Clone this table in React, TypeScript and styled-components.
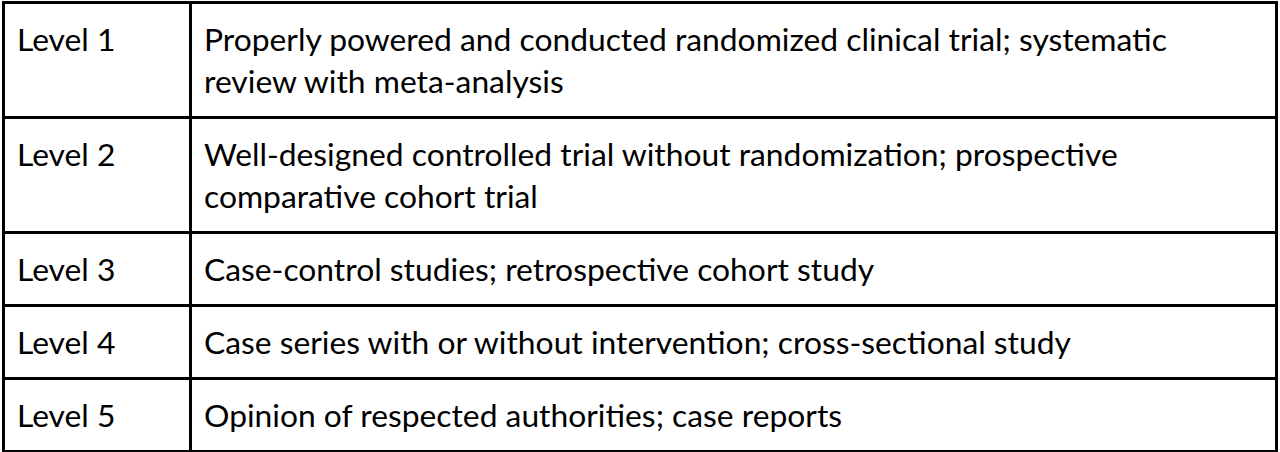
import React from "react";
import styled, { createGlobalStyle } from "styled-components";

const GlobalStyle = createGlobalStyle`
  html, body { margin: 0; padding: 0; background: #ffffff; }
  body { width: 1280px; height: 452px; overflow: hidden; }
`;

const Page = styled.div`
  padding: 1px 2px 3px 2px;
  background: #ffffff;
`;

const Table = styled.div`
  display: grid;
  grid-template-columns: 184px 1fr;
  gap: 3px;
  padding: 3px;
  background: #000000;
  width: 1270px;
`;

const Cell = styled.div`
  background: #ffffff;
  padding: 14px 10px 14px 12px;
  font-family: "Lato", "Open Sans", sans-serif;
  font-size: 31.8px;
  line-height: 42px;
  color: #000000;
`;

const Line = styled.span`
  display: block;
  white-space: nowrap;
`;

const rows: { level: string; lines: string[] }[] = [
  {
    level: "Level 1",
    lines: [
      "Properly powered and conducted randomized clinical trial; systematic",
      "review with meta-analysis",
    ],
  },
  {
    level: "Level 2",
    lines: [
      "Well-designed controlled trial without randomization; prospective",
      "comparative cohort trial",
    ],
  },
  { level: "Level 3", lines: ["Case-control studies; retrospective cohort study"] },
  { level: "Level 4", lines: ["Case series with or without intervention; cross-sectional study"] },
  { level: "Level 5", lines: ["Opinion of respected authorities; case reports"] },
];

export default function App() {
  return (
    <>
      <GlobalStyle />
      <Page>
        <Table>
          {rows.map((r) => (
            <React.Fragment key={r.level}>
              <Cell>
                <Line>{r.level}</Line>
              </Cell>
              <Cell>
                {r.lines.map((l) => (
                  <Line key={l}>{l}</Line>
                ))}
              </Cell>
            </React.Fragment>
          ))}
        </Table>
      </Page>
    </>
  );
}
